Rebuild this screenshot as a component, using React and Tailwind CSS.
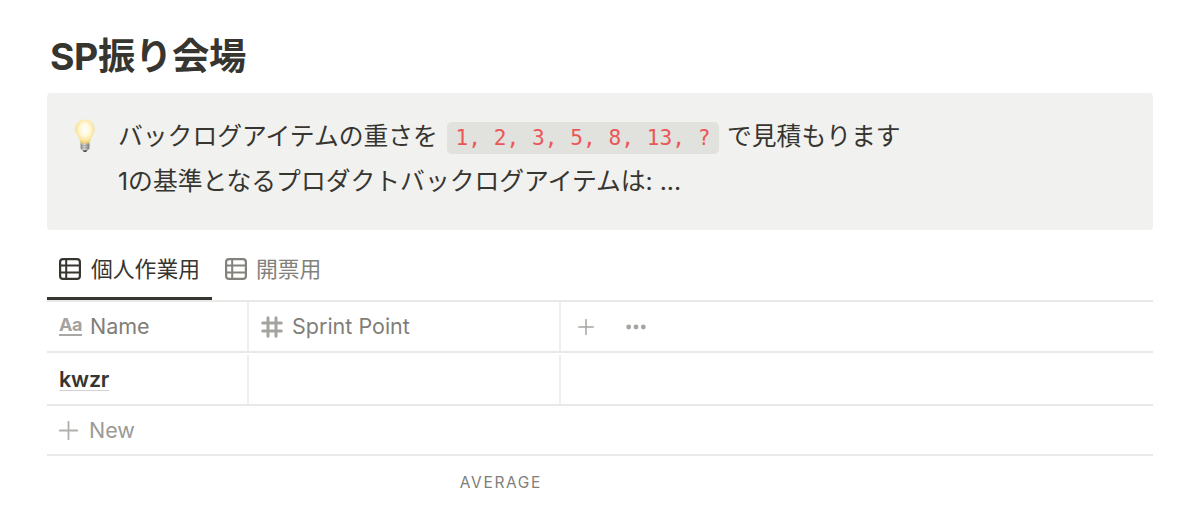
import React from "react";

const TableIcon = ({ className }) => (
  <svg viewBox="0 0 22 22" className={className} fill="none" stroke="currentColor" strokeWidth="2">
    <rect x="1.1" y="1.1" width="19.8" height="19.8" rx="3" strokeWidth="2.2" />
    <path d="M1 7.6h20M1 14.4h20M7.2 1v20" />
  </svg>
);

const HashIcon = ({ className }) => (
  <svg viewBox="0 0 22 22" className={className} fill="none" stroke="currentColor" strokeWidth="3" strokeLinecap="round">
    <path d="M1.7 7h18.6M1.7 15h18.6M7 1.7v18.6M15 1.7v18.6" />
  </svg>
);

const PlusIcon = ({ className }) => (
  <svg viewBox="0 0 18 18" className={className} fill="none" stroke="currentColor" strokeWidth="1.7" strokeLinecap="round">
    <path d="M9 .8v16.4M.8 9h16.4" />
  </svg>
);

const DotsIcon = ({ className }) => (
  <svg viewBox="0 0 20 6" className={className} fill="currentColor">
    <circle cx="2.7" cy="3" r="2.4" />
    <circle cx="10" cy="3" r="2.4" />
    <circle cx="17.3" cy="3" r="2.4" />
  </svg>
);

const BulbIcon = ({ className }) => (
  <svg viewBox="0 0 20 34" className={className}>
    <defs>
      <radialGradient id="glass" cx="0.5" cy="0.42" r="0.56">
        <stop offset="0" stopColor="#fffefa" />
        <stop offset="0.45" stopColor="#fff8dc" />
        <stop offset="0.8" stopColor="#fbe6a0" />
        <stop offset="1" stopColor="#ebca74" />
      </radialGradient>
      <linearGradient id="base" x1="0" x2="1">
        <stop offset="0" stopColor="#858585" />
        <stop offset="0.4" stopColor="#dedede" />
        <stop offset="1" stopColor="#777777" />
      </linearGradient>
    </defs>
    <path d="M5.6 23.500h8.800v6.200l-2 1.800H7.600l-2-1.800z" fill="url(#base)" />
    <path d="M5.6 26.800l8.800-.6M5.600 29l8.800-.6" stroke="#8d8d8d" strokeWidth=".6" />
    <path d="M7.6 31.300h4.800l-1.200 1.600H8.800z" fill="#4d4d4d" />
    <path d="M10 .4C4.600.4.300 4.600.300 10c0 3.600 1.700 5.700 3.100 8.200 1.200 2.200 1.300 3.500 2.100 5.600.3.600.8.800 1.400.8h6.200c.6 0 1.100-.2 1.400-.8.8-2.100.9-3.400 2.100-5.600 1.400-2.500 3.100-4.600 3.100-8.200C19.700 4.600 15.400.4 10 .4z" fill="url(#glass)" />
  </svg>
);

const App = () => {
  return (
    <div className="h-[511px] overflow-hidden bg-white px-[47px] pt-[34px] font-[Inter,'Noto_Sans_CJK_JP',sans-serif] text-[#37352f]">
      <h1 className="h-[58.500px] whitespace-nowrap pl-[3px] text-[37.400px] leading-[46px] font-bold tracking-[-0.4px]">SP振り会場</h1>

      <div className="flex h-[137px] rounded-[4px] bg-[#f1f1ef] pl-[28px] pt-[21.500px]">
        <BulbIcon className="mt-[5px] h-[34px] w-[20px] shrink-0" />
        <div className="ml-[23px] whitespace-nowrap text-[24.800px] leading-[45px]">
          <p className="flex h-[45px] items-center">
            <span>バックログアイテムの重さを</span>
            <code className="ml-[9px] mr-[8px] mt-[2px] flex h-[32px] items-center whitespace-pre rounded-[5px] bg-[#e1e1dd] px-[8.500px] font-['DejaVu_Sans_Mono',monospace] text-[21.200px] text-[#eb5757]">1, 2, 3, 5, 8, 13, ?</code>
            <span>で見積もります</span>
          </p>
          <p>1の基準となるプロダクトバックログアイテムは: ...</p>
        </div>
      </div>

      <div className="flex h-[72.500px] border-b-2 border-[#e9e9e7] pt-[8.500px] text-[21.800px]">
        <div className="flex h-[62px] w-[165px] shrink-0 items-center border-b-3 border-[#37352f] pl-[12px]">
          <TableIcon className="mt-[2px] h-[22px] w-[22px] shrink-0" />
          <span className="mt-[3px] ml-[10px] whitespace-nowrap">個人作業用</span>
        </div>
        <div className="flex h-[62px] items-center border-b-3 border-transparent pl-[13px] text-[#82817c]">
          <TableIcon className="mt-[2px] h-[22px] w-[22px] shrink-0" />
          <span className="mt-[3px] ml-[9px] whitespace-nowrap">開票用</span>
        </div>
      </div>

      <div className="flex h-[51px] border-b-2 border-[#e9e9e7] text-[21.500px] text-[#7f7e79]">
        <div className="flex w-[202px] items-center border-r-2 border-[#eeeeec] pl-[12px]">
          <span className="h-[18px] w-[23px] border-b-2 border-[#a9a8a5] text-[18px] leading-[14px] font-bold tracking-[-0.5px] text-[#a3a29e]">Aa</span>
          <span className="ml-[8px]">Name</span>
        </div>
        <div className="flex w-[312px] items-center border-r-2 border-[#eeeeec] pl-[12px]">
          <HashIcon className="mt-px h-[22px] w-[22px] text-[#a5a4a0]" />
          <span className="ml-[9px]">Sprint Point</span>
        </div>
        <div className="flex items-center pl-[17px] text-[#a5a4a0]">
          <PlusIcon className="h-[16px] w-[16px]" />
          <DotsIcon className="ml-[32px] h-[6px] w-[20px]" />
        </div>
      </div>

      <div className="flex h-[53px] border-b-2 border-[#e9e9e7] pt-[2px] text-[21.500px]">
        <div className="w-[202px] border-r-2 border-[#eeeeec] pl-[12px] pt-[11px]">
          <span className="block h-[25px] w-[50px] border-b border-[#d3d2cf] leading-[26px] font-semibold tracking-[-0.2px]">kwzr</span>
        </div>
        <div className="w-[312px] border-r-2 border-[#eeeeec]" />
      </div>

      <div className="flex h-[50px] items-center border-b-2 border-[#e9e9e7] pl-[12px] text-[21.500px] text-[#9b9a96]">
        <PlusIcon className="h-[19px] w-[19px] text-[#b0afac]" />
        <span className="ml-[11px]">New</span>
      </div>

      <div className="flex w-[495px] justify-end pt-[16px] text-[15.500px] leading-[22px] tracking-[1.650px] text-[#7f7e79]">AVERAGE</div>
    </div>
  );
};

export default App;
